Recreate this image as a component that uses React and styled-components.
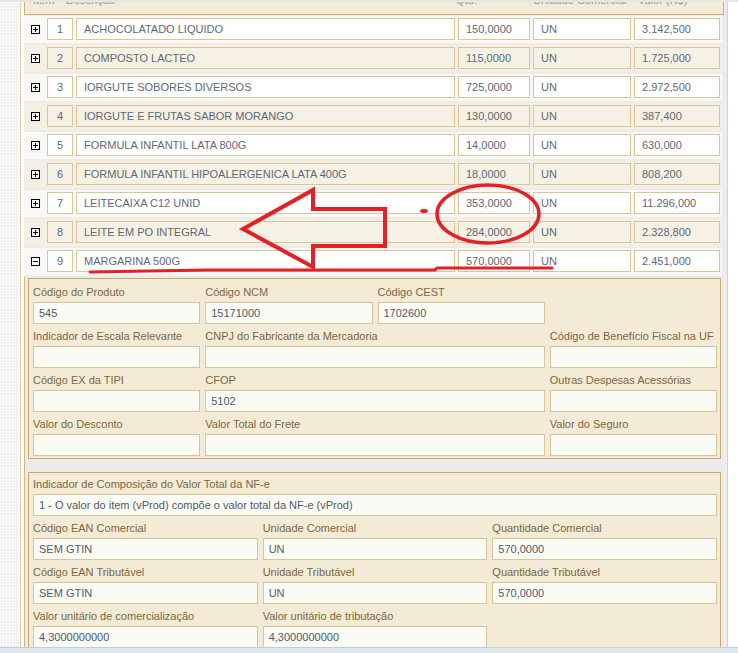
import React from "react";
import styled, { createGlobalStyle } from "styled-components";

const Global = createGlobalStyle`
  html, body { margin: 0; padding: 0; background: #fff; }
  body { font-family: "Liberation Sans", Arial, sans-serif; }
  * { box-sizing: border-box; }
`;

const Viewport = styled.div`
  width: 738px;
  height: 653px;
  display: flex;
  flex-direction: column;
  border-top: 2px solid #e6e6e6;
  overflow: hidden;
  position: relative;
`;

const Main = styled.div`
  flex: 1;
  display: flex;
  overflow: hidden;
  min-height: 0;
`;

const Gutter = styled.div`
  width: 20px;
  flex: none;
  background-color: #ececec;
  background-image: linear-gradient(90deg, #fff 1px, transparent 1px),
    linear-gradient(#fff 1px, transparent 1px);
  background-size: 3px 3px;
`;

const Frame = styled.div`
  width: 708px;
  flex: none;
  border-left: 1px solid #e2d1aa;
  border-right: 1px solid #e2d1aa;
  padding-left: 3px;
  background: #fff;
`;

const Table = styled.div`
  margin-top: -17px;
  background: #ececec;
  padding: 0 5px 0 0;
`;

const Header = styled.div`
  display: flex;
  height: 30px;
  margin-right: -2px;
  background: #f3ebd5;
  border: 1px solid #cfb27a;
  border-top: none;
  margin-bottom: 1px;
  overflow: hidden;
`;

const HeadCell = styled.div`
  width: ${(p) => p.$w || "auto"};
  flex: none;
  font-size: 11px;
  line-height: 31px;
  color: #9a9a9a;
  padding-left: ${(p) => p.$pl || 0}px;
`;

const Row = styled.div`
  display: grid;
  grid-template-columns: 20px 26px 379px 72px 98px 86px;
  column-gap: 3px;
  align-items: center;
  padding: 2px 2px 3px 0;
  margin-bottom: 2px;
  background: ${(p) => (p.$even ? "#f4efe2" : "#f9f8f5")};
`;

const Toggle = styled.div`
  display: flex;
  justify-content: flex-end;
  padding-right: 4px;
  line-height: 0;
`;

const Cell = styled.div`
  height: 22px;
  border: 1px solid #dac59b;
  background: ${(p) => (p.$even ? "#f6f1e5" : "#ffffff")};
  font-size: 11px;
  line-height: 20px;
  color: #5f6874;
  white-space: nowrap;
  overflow: hidden;
  text-align: ${(p) => (p.$center ? "center" : "left")};
  padding-left: ${(p) => (p.$center ? 0 : p.$pl || 7)}px;
`;

const DetailWrap = styled.div`
  border-left: 1px solid #d2b67c;
  padding: 1px 1px 0 3px;
  background: #ebebeb;
`;

const Panel = styled.div`
  background: #f3ebd5;
  border: 1px solid #c8a866;
  padding: ${(p) => p.$pt}px 3px 2px 4px;
  margin-bottom: 13px;
  display: grid;
  grid-template-columns: repeat(${(p) => p.$cols}, 1fr);
  column-gap: ${(p) => p.$gap}px;
  row-gap: 4px;
`;

const Field = styled.div`
  grid-column: span ${(p) => p.$span || 1};
  display: flex;
  flex-direction: column;
  gap: 2px;
`;

const Label = styled.div`
  font-size: 11px;
  line-height: 16px;
  color: #7b6742;
  white-space: nowrap;
`;

const Input = styled.div`
  height: 22px;
  border: 1px solid #d9c59c;
  background: #fbfbf5;
  font-size: 11px;
  line-height: 20px;
  color: #4f5a69;
  padding-left: 5px;
  white-space: nowrap;
  overflow: hidden;
`;

const Spacer = styled.div``;

const StatusBar = styled.div`
  height: 6px;
  flex: none;
  border-top: 1px solid #c9ccd0;
  background: #dde9f3;
`;

const Marks = styled.svg`
  position: absolute;
  left: 0;
  top: -2px;
  pointer-events: none;
`;

const ExpandIcon = ({ open }) => (
  <svg width="9" height="9" viewBox="0 0 9 9">
    <rect x="0.5" y="0.5" width="8" height="8" fill="#fff" stroke="#000" />
    <line x1="2" y1="4.5" x2="7" y2="4.5" stroke="#000" />
    {!open && <line x1="4.5" y1="2" x2="4.5" y2="7" stroke="#000" />}
  </svg>
);

const items = [
  ["ACHOCOLATADO LIQUIDO", "150,0000", "3.142,500"],
  ["COMPOSTO LACTEO", "115,0000", "1.725,000"],
  ["IORGUTE SOBORES DIVERSOS", "725,0000", "2.972,500"],
  ["IORGUTE E FRUTAS SABOR MORANGO", "130,0000", "387,400"],
  ["FORMULA INFANTIL LATA 800G", "14,0000", "630,000"],
  ["FORMULA INFANTIL HIPOALERGENICA LATA 400G", "18,0000", "808,200"],
  ["LEITECAIXA C12 UNID", "353,0000", "11.296,000"],
  ["LEITE EM PO INTEGRAL", "284,0000", "2.328,800"],
  ["MARGARINA 500G", "570,0000", "2.451,000"],
];

const productFields = [
  ["Código do Produto", "545"],
  ["Código NCM", "15171000"],
  ["Código CEST", "1702600"],
  null,
  ["Indicador de Escala Relevante", ""],
  ["CNPJ do Fabricante da Mercadoria", "", 2],
  ["Código de Benefício Fiscal na UF", ""],
  ["Código EX da TIPI", ""],
  ["CFOP", "5102", 2],
  ["Outras Despesas Acessórias", ""],
  ["Valor do Desconto", ""],
  ["Valor Total do Frete", "", 2],
  ["Valor do Seguro", ""],
];

const tradeFields = [
  ["Indicador de Composição do Valor Total da NF-e", "1 - O valor do item (vProd) compõe o valor total da NF-e (vProd)", 3],
  ["Código EAN Comercial", "SEM GTIN"],
  ["Unidade Comercial", "UN"],
  ["Quantidade Comercial", "570,0000"],
  ["Código EAN Tributável", "SEM GTIN"],
  ["Unidade Tributável", "UN"],
  ["Quantidade Tributável", "570,0000"],
  ["Valor unitário de comercialização", "4,3000000000"],
  ["Valor unitário de tributação", "4,3000000000"],
  null,
];

const renderFields = (list) =>
  list.map((f, i) =>
    f ? (
      <Field key={i} $span={f[2]}>
        <Label>{f[0]}</Label>
        <Input>{f[1]}</Input>
      </Field>
    ) : (
      <Spacer key={i} />
    )
  );

export default function App() {
  return (
    <>
      <Global />
      <Viewport>
        <Main>
          <Gutter />
          <Frame>
            <Table>
              <Header>
                <HeadCell $w="41px" $pl={8}>Item</HeadCell>
                <HeadCell $w="390px">Descrição</HeadCell>
                <HeadCell $w="77px">Qtd.</HeadCell>
                <HeadCell $w="105px">Unidade Comercial</HeadCell>
                <HeadCell>Valor (R$)</HeadCell>
              </Header>
              {items.map(([desc, qty, val], i) => {
                const even = i % 2 === 1;
                const open = i === items.length - 1;
                return (
                  <Row key={i} $even={even}>
                    <Toggle>
                      <ExpandIcon open={open} />
                    </Toggle>
                    <Cell $even={even} $center>{i + 1}</Cell>
                    <Cell $even={even} $pl={7}>{desc}</Cell>
                    <Cell $even={even}>{qty}</Cell>
                    <Cell $even={even}>UN</Cell>
                    <Cell $even={even}>{val}</Cell>
                  </Row>
                );
              })}
              <DetailWrap>
                <Panel $cols={4} $gap={5} $pt={5}>
                  {renderFields(productFields)}
                </Panel>
                <Panel $cols={3} $gap={5} $pt={3}>
                  {renderFields(tradeFields)}
                </Panel>
              </DetailWrap>
            </Table>
          </Frame>
        </Main>
        <StatusBar />
        <Marks width="738" height="653" viewBox="0 0 738 653">
          <g fill="none" stroke="#e41f26" strokeLinejoin="miter">
            <path
              d="M243 229 L313 190 L313 209 L385 209 L385 246 L313 246 L313 267 Z"
              strokeWidth="4"
            />
            <ellipse cx="488" cy="214" rx="51" ry="29" strokeWidth="3.5" />
            <polyline
              points="90,272 207,270 435,270 437,268 552,268"
              strokeWidth="3"
              strokeLinecap="round"
            />
          </g>
          <ellipse cx="424" cy="211" rx="4" ry="2" fill="#e41f26" />
        </Marks>
      </Viewport>
    </>
  );
}
